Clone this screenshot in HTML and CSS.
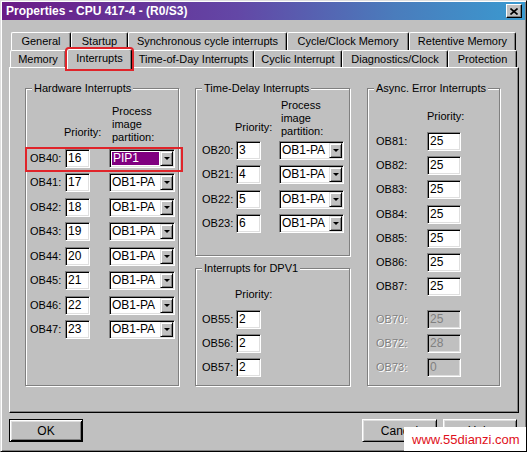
FILE: index.html
```html
<!DOCTYPE html>
<html>
<head>
<meta charset="utf-8">
<title>Properties - CPU 417-4 - (R0/S3)</title>
<link rel="stylesheet" href="styles.css">
</head>
<body>
<div class="window">
  <div class="titlebar">
    <span class="title">Properties - CPU 417-4 - (R0/S3)</span>
    <span class="close"><svg width="8" height="7" viewBox="0 0 8 7"><path d="M0.5 0.5L7.5 6.5M7.5 0.5L0.5 6.5" stroke="#000" stroke-width="1.6" fill="none"/></svg></span>
  </div>

  <div class="tabs">
    <div class="tabrow row1">
      <div class="tab w-general">General</div>
      <div class="tab w-startup">Startup</div>
      <div class="tab w-sync">Synchronous cycle interrupts</div>
      <div class="tab w-clock">Cycle/Clock Memory</div>
      <div class="tab w-retentive">Retentive Memory</div>
    </div>
    <div class="tabrow row2">
      <div class="tab w-memory">Memory</div>
      <div class="tab selected w-interrupts">Interrupts</div>
      <div class="tab w-tod">Time-of-Day Interrupts</div>
      <div class="tab w-cyclic">Cyclic Interrupt</div>
      <div class="tab w-diag">Diagnostics/Clock</div>
      <div class="tab w-prot">Protection</div>
    </div>
  </div>

  <div class="panel">
    <div class="col col1">
      <fieldset class="group hw">
        <legend>Hardware Interrupts</legend>
        <div class="head">
          <div class="prio">Priority:</div>
          <div class="pip">Process<br>image<br>partition:</div>
        </div>
        <div class="rows">
          <div class="row hl"><span class="lbl">OB40:</span><span class="field">16</span><span class="combo"><span class="val"><span class="sel">PIP1</span></span><span class="btn"><span class="arr"></span></span></span></div>
          <div class="row"><span class="lbl">OB41:</span><span class="field">17</span><span class="combo"><span class="val">OB1-PA</span><span class="btn"><span class="arr"></span></span></span></div>
          <div class="row"><span class="lbl">OB42:</span><span class="field">18</span><span class="combo"><span class="val">OB1-PA</span><span class="btn"><span class="arr"></span></span></span></div>
          <div class="row"><span class="lbl">OB43:</span><span class="field">19</span><span class="combo"><span class="val">OB1-PA</span><span class="btn"><span class="arr"></span></span></span></div>
          <div class="row"><span class="lbl">OB44:</span><span class="field">20</span><span class="combo"><span class="val">OB1-PA</span><span class="btn"><span class="arr"></span></span></span></div>
          <div class="row"><span class="lbl">OB45:</span><span class="field">21</span><span class="combo"><span class="val">OB1-PA</span><span class="btn"><span class="arr"></span></span></span></div>
          <div class="row"><span class="lbl">OB46:</span><span class="field">22</span><span class="combo"><span class="val">OB1-PA</span><span class="btn"><span class="arr"></span></span></span></div>
          <div class="row"><span class="lbl">OB47:</span><span class="field">23</span><span class="combo"><span class="val">OB1-PA</span><span class="btn"><span class="arr"></span></span></span></div>
        </div>
      </fieldset>
    </div>

    <div class="col col2">
      <fieldset class="group td">
        <legend>Time-Delay Interrupts</legend>
        <div class="head">
          <div class="prio">Priority:</div>
          <div class="pip">Process<br>image<br>partition:</div>
        </div>
        <div class="rows">
          <div class="row"><span class="lbl">OB20:</span><span class="field">3</span><span class="combo"><span class="val">OB1-PA</span><span class="btn"><span class="arr"></span></span></span></div>
          <div class="row"><span class="lbl">OB21:</span><span class="field">4</span><span class="combo"><span class="val">OB1-PA</span><span class="btn"><span class="arr"></span></span></span></div>
          <div class="row"><span class="lbl">OB22:</span><span class="field">5</span><span class="combo"><span class="val">OB1-PA</span><span class="btn"><span class="arr"></span></span></span></div>
          <div class="row"><span class="lbl">OB23:</span><span class="field">6</span><span class="combo"><span class="val">OB1-PA</span><span class="btn"><span class="arr"></span></span></span></div>
        </div>
      </fieldset>
      <fieldset class="group dp">
        <legend>Interrupts for DPV1</legend>
        <div class="head"><div class="prio">Priority:</div></div>
        <div class="rows">
          <div class="row"><span class="lbl">OB55:</span><span class="field">2</span></div>
          <div class="row"><span class="lbl">OB56:</span><span class="field">2</span></div>
          <div class="row"><span class="lbl">OB57:</span><span class="field">2</span></div>
        </div>
      </fieldset>
    </div>

    <div class="col col3">
      <fieldset class="group ae">
        <legend>Async. Error Interrupts</legend>
        <div class="head"><div class="prio">Priority:</div></div>
        <div class="rows">
          <div class="row"><span class="lbl">OB81:</span><span class="field">25</span></div>
          <div class="row"><span class="lbl">OB82:</span><span class="field">25</span></div>
          <div class="row"><span class="lbl">OB83:</span><span class="field">25</span></div>
          <div class="row"><span class="lbl">OB84:</span><span class="field">25</span></div>
          <div class="row"><span class="lbl">OB85:</span><span class="field">25</span></div>
          <div class="row"><span class="lbl">OB86:</span><span class="field">25</span></div>
          <div class="row"><span class="lbl">OB87:</span><span class="field">25</span></div>
        </div>
        <div class="rows disabled">
          <div class="row"><span class="lbl">OB70:</span><span class="field">25</span></div>
          <div class="row"><span class="lbl">OB72:</span><span class="field">28</span></div>
          <div class="row"><span class="lbl">OB73:</span><span class="field">0</span></div>
        </div>
      </fieldset>
    </div>
  </div>

  <div class="buttons">
    <div class="button default">OK</div>
    <div class="spacer"></div>
    <div class="button w-cancel">Cancel</div>
    <div class="button">Help</div>
  </div>

  <div class="watermark">www.55dianzi.com</div>
</div>
</body>
</html>
```

FILE: styles.css
```css
* { box-sizing: border-box; }

body {
  margin: 0;
  background: #c0c0c0;
  font-family: "Liberation Sans", Arial, sans-serif;
  font-size: 11px;
  color: #000;
}

.window {
  position: relative;
  width: 527px;
  height: 452px;
  padding: 1px;
  background: #c0c0c0;
  border: 1px solid;
  border-color: #dfdfdf #000 #000 #dfdfdf;
  box-shadow: inset 1px 1px #fff, inset -1px -1px #808080;
  display: flex;
  flex-direction: column;
  overflow: hidden;
}

/* title bar */
.titlebar {
  height: 18px;
  flex: none;
  display: flex;
  align-items: center;
  padding: 0 3px 0 4px;
  background: linear-gradient(to right, #6a1b86 0%, #6347a6 45%, #4a7cbc 75%, #3a9ad0 100%);
}
.title {
  color: #fff;
  font-weight: bold;
  font-size: 12px;
  line-height: 14px;
}
.close {
  margin-left: auto;
  width: 16px;
  height: 14px;
  display: flex;
  align-items: center;
  justify-content: center;
  background: #c0c0c0;
  border: 1px solid;
  border-color: #fff #000 #000 #fff;
  box-shadow: inset -1px -1px #808080;
}

/* tabs */
.tabs { margin-top: 12px; flex: none; }
.tabrow { display: flex; }
.row1 { height: 18px; padding-left: 9px; }
.row2 { height: 17px; padding-left: 8px; align-items: flex-end; }

.tab {
  height: 100%;
  display: flex;
  align-items: center;
  justify-content: center;
  white-space: nowrap;
  background: #c0c0c0;
  border-top: 1px solid #fff;
  border-left: 1px solid #fff;
  border-right: 1px solid #000;
  border-radius: 2px 2px 0 0;
  box-shadow: inset -1px 0 #808080;
  line-height: 13px;
}
.row2 .tab { height: 17px; }
.tab.selected {
  height: 20px;
  margin: 0 1px -2px 1px;
  align-items: flex-start;
  padding-top: 2px;
  z-index: 2;
  outline: 2px solid #e0242a;
}

.w-general { width: 60px; }
.w-startup { width: 57px; }
.w-sync { width: 159px; }
.w-clock { width: 122px; }
.w-retentive { width: 107px; }
.w-memory { width: 56px; }
.w-interrupts { width: 65px; }
.w-tod { width: 121px; }
.w-cyclic { width: 88px; }
.w-diag { width: 106px; }
.w-prot { width: 69px; }

/* panel */
.panel {
  flex: none;
  margin-left: 7px;
  width: 510px;
  height: 346px;
  border: 1px solid;
  border-color: #fff #000 #000 #fff;
  box-shadow: inset -1px -1px #808080;
  padding: 14px 0 0 15px;
  display: flex;
  align-items: flex-start;
}
.col1 { width: 154px; margin-right: 16px; }
.col2 { width: 155px; margin-right: 17px; }
.col3 { width: 133px; }

.group {
  margin: 0;
  padding: 0;
  min-width: 0;
  width: 100%;
  border: 1px solid #808080;
  box-shadow: 1px 1px 0 #fff, inset 1px 1px 0 #fff;
}
.group legend {
  margin-left: 6px;
  padding: 0 2px;
  line-height: 13px;
  background: #c0c0c0;
  white-space: nowrap;
}

.hw { height: 304px; }
.td { height: 174px; }
.dp { height: 124px; margin-top: 6px; }
.ae { height: 304px; }

.head { display: flex; align-items: flex-end; line-height: 13px; white-space: nowrap; }
.prio { flex: none; }

.hw .head { padding: 10px 0 0 38px; }
.hw .prio { width: 48px; margin-bottom: 5px; }
.td .head { padding: 4px 0 0 39px; }
.td .prio { width: 46px; margin-bottom: 4px; }
.dp .head { padding: 13px 0 0 39px; }
.ae .head { padding: 15px 0 0 59px; }

.rows { display: flex; flex-direction: column; }
.row {
  position: relative;
  display: flex;
  align-items: center;
  height: 19px;
  flex: none;
  white-space: nowrap;
}

.hw .rows { padding-left: 4px; margin-top: 5px; gap: 5.43px; }
.hw .lbl { width: 35px; }
.hw .field { width: 25px; margin-right: 19px; }
.hw .combo { width: 66px; }

.td .rows { padding-left: 6px; margin-top: 3px; gap: 5.4px; }
.td .lbl { width: 34px; }
.td .field { width: 25px; margin-right: 18px; }
.td .combo { width: 65px; }

.dp .rows { padding-left: 6px; margin-top: 9px; gap: 5px; }
.dp .lbl { width: 34px; }
.dp .field { width: 25px; }

.ae .rows { padding-left: 8px; margin-top: 9px; gap: 5.2px; }
.ae .rows.disabled { margin-top: 13.5px; gap: 5px; }
.ae .lbl { width: 51px; }
.ae .field { width: 34px; }

.lbl { flex: none; line-height: 13px; }

.field {
  flex: none;
  height: 19px;
  padding-left: 1px;
  line-height: 17px;
  font-size: 12px;
  background: #fff;
  border: 1px solid;
  border-color: #808080 #fff #fff #808080;
  box-shadow: inset 1px 1px #000, inset -1px -1px #dfdfdf;
}
.field { padding-left: 2px; }

.disabled .lbl { color: #808080; text-shadow: 1px 1px 0 #fff; }
.disabled .field { background: #c0c0c0; color: #808080; }

.combo {
  flex: none;
  height: 19px;
  display: flex;
  padding: 1px;
  background: #fff;
  border: 1px solid;
  border-color: #808080 #fff #fff #808080;
  box-shadow: inset 1px 1px #000, inset -1px -1px #dfdfdf;
}
.val {
  flex: 1;
  min-width: 0;
  padding: 1px;
  font-size: 12px;
  line-height: 13px;
  display: flex;
  align-items: center;
}
.sel {
  flex: 1;
  align-self: stretch;
  background: #800080;
  color: #fff;
  padding-left: 1px;
  display: flex;
  align-items: center;
}
.btn {
  flex: none;
  width: 13px;
  background: #c0c0c0;
  border: 1px solid;
  border-color: #dfdfdf #000 #000 #dfdfdf;
  box-shadow: inset 1px 1px #fff, inset -1px -1px #808080;
  display: flex;
  align-items: center;
  justify-content: center;
}
.arr {
  width: 0;
  height: 0;
  border-left: 3px solid transparent;
  border-right: 3px solid transparent;
  border-top: 3px solid #000;
}

/* red highlight over the OB40 row */
.row.hl::before {
  content: "";
  position: absolute;
  top: -2px;
  bottom: -4px;
  left: -5px;
  right: -5px;
  border: 2px solid #e0242a;
}

/* buttons */
.buttons {
  flex: none;
  display: flex;
  margin-top: 6px;
  height: 23px;
  padding: 0 8px 0 7px;
  gap: 6px;
}
.spacer { flex: 1; }
.button {
  width: 74px;
  height: 23px;
  display: flex;
  align-items: center;
  justify-content: center;
  font-size: 12px;
  background: #c0c0c0;
  border: 1px solid;
  border-color: #fff #000 #000 #fff;
  box-shadow: inset 1px 1px #dfdfdf, inset -1px -1px #808080;
}
.button.w-cancel { width: 75px; }
.button.default {
  border: 1px solid #000;
  box-shadow: inset 1px 1px #fff, inset -1px -1px #000, inset 2px 2px #dfdfdf, inset -2px -2px #808080;
}

/* watermark overlay */
.watermark {
  position: absolute;
  left: 403px;
  top: 426px;
  right: -1px;
  bottom: -1px;
  background: #fff;
  color: #e01020;
  font-size: 13px;
  line-height: 25px;
  padding-left: 8px;
  white-space: nowrap;
}
```
